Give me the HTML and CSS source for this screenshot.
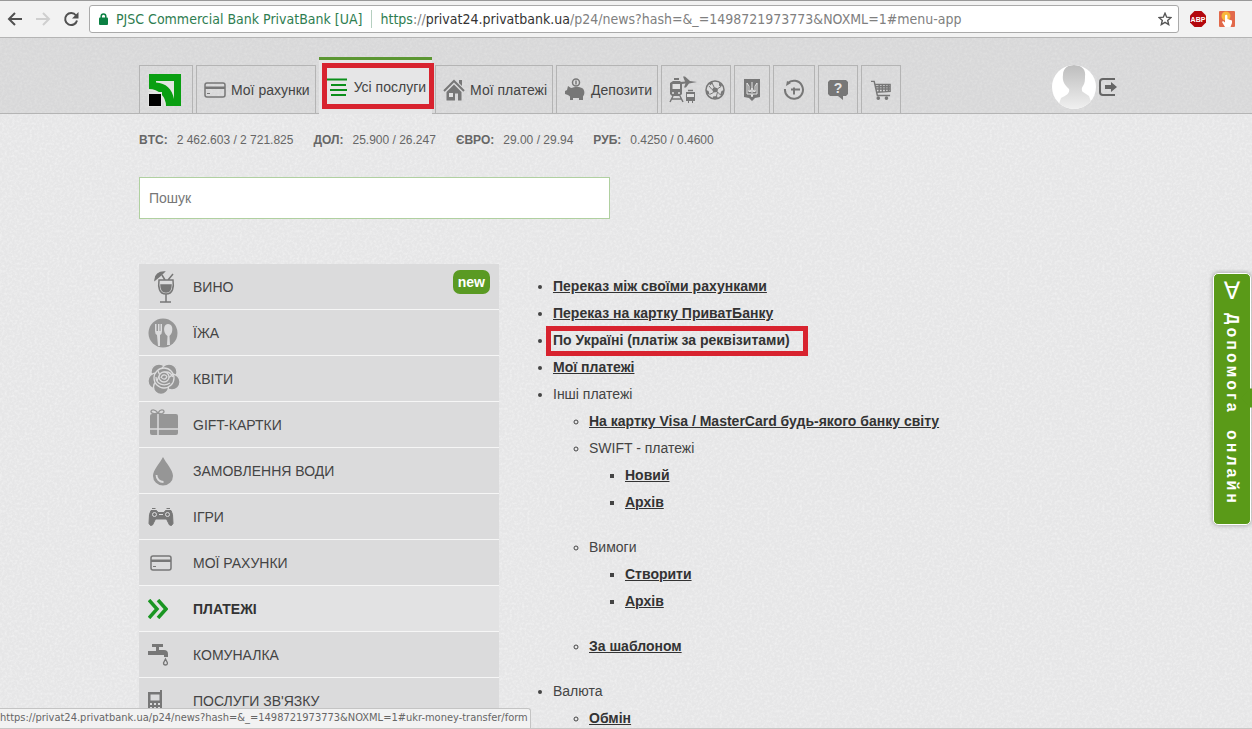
FILE: index.html
```html
<!DOCTYPE html>
<html lang="uk">
<head>
<meta charset="utf-8">
<title>Приват24</title>
<link rel="stylesheet" href="styles.css">
</head>
<body>
<div class="browser">
  <div class="toolbar">
    <button class="tool" aria-label="Назад"><svg width="16" height="16" viewBox="0 0 16 16" fill="none" stroke="#505050" stroke-width="2"><path d="M15 8H2M8 2L2 8l6 6"/></svg></button>
    <button class="tool" aria-label="Вперед"><svg width="16" height="16" viewBox="0 0 16 16" fill="none" stroke="#cfcfcf" stroke-width="2"><path d="M1 8h13M8 2l6 6-6 6"/></svg></button>
    <button class="tool" aria-label="Оновити"><svg width="16" height="16" viewBox="0 0 16 16"><path d="M13 4.500A6 6 0 1 0 14 9.500" fill="none" stroke="#505050" stroke-width="2"/><path d="M15.500 1v6.500H9z" fill="#505050"/></svg></button>
    <div class="address">
      <svg width="9" height="12" viewBox="0 0 9 12"><path d="M2.200 5V3.200a2.300 2.300 0 0 1 4.600 0V5" fill="none" stroke="#0b8043" stroke-width="1.500"/><rect y="4.500" width="9" height="7.500" rx="1" fill="#0b8043"/></svg>
      <span class="owner">PJSC Commercial Bank PrivatBank [UA]</span>
      <span class="url"><span class="secure">https</span>://<span class="host">privat24.privatbank.ua</span>/p24/news?hash=&amp;_=1498721973773&amp;NOXML=1#menu-app</span>
      <button class="tool star" aria-label="Закладка"><svg width="14" height="14" viewBox="0 0 14 14"><path d="M7 1.300l1.700 3.900 4.200.400-3.200 2.800 1 4.200L7 10.400l-3.700 2.200 1-4.200L1.100 5.600l4.200-.400z" fill="none" stroke="#555" stroke-width="1.400"/></svg></button>
    </div>
    <button class="tool" aria-label="Adblock Plus"><svg width="18" height="18" viewBox="0 0 18 18"><path d="M5.500 1h7L17 5.500v7L12.500 17h-7L1 12.500v-7z" fill="#b3070d"/><text x="9" y="12" text-anchor="middle" class="abp">ABP</text></svg></button>
    <button class="tool" aria-label="Розширення"><svg width="16" height="16" viewBox="0 0 16 16"><rect width="16" height="16" rx="1" fill="#e2694a"/><circle cx="7" cy="5" r="4.500" fill="#f8b83c"/><path d="M6 5a1.200 1.200 0 0 1 2.400 0v3l4.600 1.500V12l-1.500 4H6l-3-5 1-1 2 1.500z" fill="#fff"/></svg></button>
  </div>

  <main class="page">
    <header class="header">
      <nav class="tabs">
        <a href="#home" class="tab tab-logo" aria-label="Приват24"><svg width="34" height="34" viewBox="0 0 34 34"><path d="M1 1h32v32H17C17 24 10 17 1 17z" fill="#0a9f12"/><path d="M8 8h18v18C24 16 18 10 8 9.500z" fill="#e4e6e2"/><path d="M8 11c9 0 15 7 17 17h-8C16 22 14 18 8 17z" fill="#0a9f12"/><path d="M1 17c9 0 16 7 16 16" fill="none" stroke="#e4e6e2" stroke-width="2"/><path d="M0 19h14v15H0z" fill="#e4e4e4"/><path d="M1 21h12v12H1z" fill="#000"/></svg></a>
        <a href="#accounts" class="tab"><svg width="22" height="16" viewBox="0 0 22 16"><rect x="1" y="1" width="20" height="14" rx="2" fill="none" stroke="#777" stroke-width="1.500"/><path d="M1 4.500h20v2.500H1z" fill="#777"/><path d="M3 11.500h3" stroke="#777"/></svg>Мої рахунки</a>
        <a href="#menu-app" class="tab tab-active"><svg width="20" height="20" viewBox="0 0 20 20"><path d="M0 2.500h20M4 8h15M3 13h17M4 18h15" stroke="#0b8f1b" stroke-width="2"/></svg>Усі послуги</a>
        <a href="#payments" class="tab"><svg width="22" height="22" viewBox="0 0 22 22" fill="#777"><path d="M16 1h3v6l-3-3z"/><path d="M1 12L11 2l10 10" fill="none" stroke="#777" stroke-width="2"/><path d="M3.500 13L11 5.500l7.500 7.500v8.500H15v-7h-3v7H3.500z"/><path d="M6 14h4v4H6z" fill="#e0e0e0"/></svg>Мої платежі</a>
        <a href="#deposits" class="tab"><svg width="22" height="24" viewBox="0 0 22 24" fill="#777"><circle cx="12" cy="4.500" r="3.500" fill="none" stroke="#777" stroke-width="1.500"/><path d="M12 2.500v4" stroke="#777" stroke-width="1.500"/><path d="M4 8l3 2c3-1.500 9-1.500 11 0 3 2 3 6 1 8.500V22h-4v-2H9v2H6v-3.500L4 17l-3-1v-3l2-1z"/></svg>Депозити</a>
        <a href="#travel" class="tab tab-icon tab-travel" aria-label="Квитки та розваги"><svg width="28" height="28" viewBox="0 0 28 28" fill="#777"><path d="M4 5h7l2 2v11l-2 2H3l-2-2V7zM5 2h5v2H5z"/><path d="M3.500 8h7.500v5H3.500z" fill="#e0e0e0"/><path d="M4 20l-3 6M11 20l3 6M3 23h9" stroke="#777" stroke-width="1.500"/><circle cx="4" cy="17" r="1" fill="#e0e0e0"/><circle cx="10" cy="17" r="1" fill="#e0e0e0"/><path d="M28 6l-8 1.500-3 4h-2l1.500-4-3.500.500-2-2 5-.500-2-5h2l5 4.500z"/><path d="M17 16h9v9h-2v2h-1v-2h-3v2h-1v-2h-2z"/><path d="M18 18h7v3h-7z" fill="#e0e0e0"/><path d="M19 14.500h5" stroke="#777" stroke-width="1.500"/></svg><svg width="20" height="20" viewBox="0 0 20 20"><circle cx="10" cy="10" r="9" fill="none" stroke="#777" stroke-width="1.500"/><path d="M9 7l4 1.500-.500 3.500-4 .500-1.500-3zM4 3l3-1.500 1 1.500-3 2.500zM14 2.500l3 2.500-1 2-2-1.500zM1 10l2.500 1 1 3-2 .500zM8 16.500l4-.500 1 2.500H8zM16.500 11l2.500-1-2 5-2 .500z" fill="#777"/><path d="M9 7L7 3M13 8.500l3-2M12.500 12l3 3M8.500 12.500l-4 2M7 9.500L4 6M12.500 12l-1 4" stroke="#777" fill="none"/></svg></a>
        <a href="#state" class="tab tab-icon" aria-label="Державні послуги"><svg width="16" height="22" viewBox="0 0 16 22"><path d="M0 0h16v18l-5 1-3 3-3-3-5-1z" fill="#777"/><path d="M3 4v11h4l1 3 1-3h4V4L11 7v5l-1 1-2-4-2 4-1-1V7zM8 3v13M4 12h8" fill="none" stroke="#e4e4e4"/></svg></a>
        <a href="#history" class="tab tab-icon" aria-label="Історія"><svg width="22" height="22" viewBox="0 0 22 22" fill="none" stroke="#777" stroke-width="2"><path d="M4.500 4.500A9 9 0 1 1 2 10M8 10.500h9M11 8.500v7"/><path d="M3 7l5-3-4-2z" fill="#777" stroke="none"/></svg></a>
        <a href="#help" class="tab tab-icon" aria-label="Допомога"><svg width="20" height="20" viewBox="0 0 20 20"><path d="M2 0h16l2 2v12l-2 2h-3v4l-5-4H2l-2-2V2z" fill="#777"/><text x="10" y="13" text-anchor="middle" class="question">?</text></svg></a>
        <a href="#cart" class="tab tab-icon" aria-label="Кошик"><svg width="20" height="22" viewBox="0 0 22 22" fill="none" stroke="#777" stroke-width="1.600"><path d="M0 1.500h3.500L7 17h14M4.500 5H21v7.500L6 13.500M5 7.500h16M6 10h15M9 5v8M12.500 5v8M16 5v8M19 5v8"/><circle cx="8" cy="20" r="1.200" fill="#777"/><circle cx="17" cy="20" r="1.200" fill="#777"/></svg></a>
      </nav>
      <div class="user">
        <a href="#profile" aria-label="Профіль"><svg width="46" height="46" viewBox="0 0 46 46"><defs><linearGradient id="shade" x2="0" y2="1"><stop stop-color="#bdbdbd"/><stop offset="1" stop-color="#f1f1f1"/></linearGradient><clipPath id="round"><circle cx="23" cy="23" r="22"/></clipPath></defs><circle cx="23" cy="23" r="22" fill="#fff"/><path clip-path="url(#round)" d="M23 1c8 0 12 5 11 11 0 4 0 7-2 10-2 2-1 6 0 6l6 4 5 14H6L10 34c6-3 9-5 8-9-4-4-7-7-6-14C12 5 16 1 23 1z" fill="url(#shade)"/></svg></a>
        <a href="#logout" aria-label="Вийти"><svg width="20" height="20" viewBox="0 0 20 20"><path d="M17 2H5Q2 2 2 5v10q0 3 3 3h12" fill="none" stroke="#666" stroke-width="2"/><path d="M7 8h6V5l6 5-6 5v-3H7z" fill="#666"/></svg></a>
      </div>
    </header>

    <div class="content">
      <dl class="rates">
        <div class="rate"><dt>BTC:</dt><dd>2 462.603 / 2 721.825</dd></div>
        <div class="rate"><dt>ДОЛ:</dt><dd>25.900 / 26.247</dd></div>
        <div class="rate"><dt>ЄВРО:</dt><dd>29.00 / 29.94</dd></div>
        <div class="rate"><dt>РУБ:</dt><dd>0.4250 / 0.4600</dd></div>
      </dl>
      <input class="search" type="search" placeholder="Пошук" aria-label="Пошук">

      <div class="columns">
        <nav class="services">
          <a href="#wine" class="service"><span class="pic"><svg width="22" height="34" viewBox="0 0 22 34" fill="none" stroke="#777" stroke-width="1.500"><path d="M1 10c0-5 4-8 9-8L7 5z" fill="#777"/><path d="M8 5l3 5M14 10l5-6M5 10h14c1 7 0 14-7 14S4 17 5 10zM12 24v8M6 32h11"/><path d="M7 15h10c0 5-2 7-5 7s-5-2-5-7z" fill="#777"/></svg></span>ВИНО<span class="badge">new</span></a>
          <a href="#food" class="service"><span class="pic"><svg width="30" height="30" viewBox="0 0 30 30"><circle cx="15" cy="15" r="14.500" fill="#969696"/><path d="M7 6v7q0 3 2 4l1 11h2V17q2-1 2-4V6l-1.500 0v7h-1V6h-1.500v7H8.500V6z" fill="#dcdcdd"/><path d="M20 6c4 0 5 4 4 8-.500 2-2 3-2.500 4L22 27h-3l.500-9c-1-1-2.500-2-3-4-1-4 0-8 3.500-8z" fill="#dcdcdd"/></svg></span>ЇЖА</a>
          <a href="#flowers" class="service"><span class="pic"><svg width="32" height="32" viewBox="0 0 32 32"><g fill="#969696" stroke="#dcdcdd" stroke-width="1.300"><circle cx="11" cy="9" r="8"/><circle cx="21" cy="9" r="8"/><circle cx="8" cy="18" r="8"/><circle cx="24" cy="19" r="8"/><circle cx="13" cy="24" r="7.500"/><circle cx="16" cy="15" r="10"/><path d="M8 14c0 7 8 10 14 6M10 8c3 9 11 8 15 3M9 18c3-10 12-12 16-4" fill="none"/><circle cx="16" cy="14" r="5"/><path d="M13 15c1-4 5-4 6-1M13 14c2 3 5 3 6-1" fill="none"/></g></svg></span>КВІТИ</a>
          <a href="#gift" class="service"><span class="pic pic-inset"><svg width="28" height="32" viewBox="0 0 28 32"><path d="M0 7q0-2 2-2h24q2 0 2 2v17q0 2-2 2H2q-2 0-2-2z" fill="#969696"/><path d="M8 5v21M0 20h28" stroke="#dcdcdd" stroke-width="1.500"/><path d="M8 4C5 0 1 0 1 3c1 2 5 2 7 1 2-4 6-4 6-1-1 2-4 2-6 1z" fill="none" stroke="#969696" stroke-width="1.400"/></svg></span>GIFT-КАРТКИ</a>
          <a href="#water" class="service"><span class="pic"><svg width="30" height="30" viewBox="0 0 30 30"><path d="M15 1c3 6 10 13 10 19a10 9.500 0 0 1-20 0C5 14 12 7 15 1z" fill="#969696"/><path d="M8.500 19c0 4 3 7 7 7" fill="none" stroke="#dcdcdd" stroke-width="1.800"/></svg></span>ЗАМОВЛЕННЯ ВОДИ</a>
          <a href="#games" class="service"><span class="pic"><svg width="26" height="20" viewBox="0 0 26 20"><path d="M3 3.500h5.500l1.500 2h6l1.500-2H23l1.500 4 .500 9-1.500 2-2-.500-3-6h-11l-3 6-2 .500L1 16.500l.500-9zM4 1.500h3.500M18.500 1.500H22" fill="#777" stroke="#777"/><circle cx="6.500" cy="7.500" r="2" fill="#777" stroke="#dcdcdd"/><circle cx="19.500" cy="7.500" r="2" fill="#777" stroke="#dcdcdd"/><path d="M11 7.500h4" stroke="#dcdcdd"/></svg></span>ІГРИ</a>
          <a href="#accounts" class="service"><span class="pic pic-inset"><svg width="22" height="16" viewBox="0 0 22 16"><rect x="1" y="1" width="20" height="14" rx="2" fill="none" stroke="#777" stroke-width="1.500"/><path d="M1 4.500h20v2.500H1z" fill="#777"/><path d="M3 11.500h3" stroke="#777"/></svg></span>МОЇ РАХУНКИ</a>
          <a href="#payments" class="service service-active"><span class="pic"><svg width="20" height="20" viewBox="0 0 20 20" fill="none" stroke="#1a9622" stroke-width="3.500"><path d="M1 1l8 9-8 9M10 1l8 9-8 9"/></svg></span>ПЛАТЕЖІ</a>
          <a href="#utilities" class="service"><span class="pic"><svg width="20" height="22" viewBox="0 0 20 22" fill="#777"><path d="M4 0h11v3H4zM8 3h3v3h5q4 0 4 4v3h-4v-2H0V7h8z"/><path d="M17.500 15l2 4a2 2 0 0 1-4 0z" fill="none" stroke="#777" stroke-width="1.300"/></svg></span>КОМУНАЛКА</a>
          <a href="#telecom" class="service"><span class="pic"><svg width="16" height="22" viewBox="0 0 16 22"><path d="M0 2h12V0h2v22H0z" fill="#777"/><path d="M2.500 4.500h9v6h-9zM2 13h2v2H2zM6 13h2v2H6zM10 13h2v2h-2zM2 17h2v2H2zM6 17h2v2H6zM10 17h2v2h-2z" fill="#dcdcdd"/></svg></span>ПОСЛУГИ ЗВ'ЯЗКУ</a>
        </nav>

        <ul class="links">
          <li><a href="#own">Переказ між своїми рахунками</a></li>
          <li><a href="#card">Переказ на картку ПриватБанку</a></li>
          <li><a href="#ukr-money-transfer/form" class="marked">По Україні (платіж за реквізитами)</a></li>
          <li><a href="#my-payments">Мої платежі</a></li>
          <li>Інші платежі
            <ul>
              <li><a href="#visa">На картку Visa / MasterCard будь-якого банку світу</a></li>
              <li>SWIFT - платежі
                <ul>
                  <li><a href="#swift-new">Новий</a></li>
                  <li><a href="#swift-archive">Архів</a></li>
                </ul>
              </li>
              <li>Вимоги
                <ul>
                  <li><a href="#claim-new">Створити</a></li>
                  <li><a href="#claim-archive">Архів</a></li>
                </ul>
              </li>
              <li><a href="#template">За шаблоном</a></li>
            </ul>
          </li>
          <li>Валюта
            <ul>
              <li><a href="#exchange">Обмін</a></li>
            </ul>
          </li>
        </ul>
      </div>
    </div>

    <button class="assist"><span class="assist-mark">∀</span><span class="assist-text">Допомога онлайн</span></button>
    <div class="status">https://privat24.privatbank.ua/p24/news?hash=&amp;_=1498721973773&amp;NOXML=1#ukr-money-transfer/form</div>
  </main>
</div>
</body>
</html>
```
FILE: styles.css
```css
* { box-sizing: border-box; }
body { margin: 0; font: 14px/18px "Liberation Sans", Arial, sans-serif; color: #444; }
a { color: inherit; text-decoration: none; }
button { font: inherit; border: 0; padding: 0; background: none; cursor: pointer; }
svg { display: block; flex: none; }

.browser { display: flex; flex-direction: column; height: 100vh; overflow: hidden; border-top: 1px solid #999; border-bottom: 1px solid #c8c6c5; }

.toolbar { display: flex; align-items: center; gap: 12px; padding: 4px 17px 4px 7px; border-bottom: 1px solid #b4b4b4; background: #f2f2f2; }
.tool { display: flex; }
.address { flex: 1; display: flex; align-items: center; min-width: 0; height: 28px; margin: 0 -2px; padding: 0 6px 0 9px; border: 1px solid #aaa; border-radius: 3px; background: #fff; font: 14px/18px "DejaVu Sans Condensed", "Noto Sans", sans-serif; color: #808080; white-space: nowrap; }
.owner { margin-left: 8px; padding-right: 9px; border-right: 1px solid #b5cfc0; color: #2e7d50; }
.url { margin-left: 8px; }
.secure { color: #2e7d50; }
.host { color: #333; }
.star { margin-left: auto; }
.abp { font: bold 7px "Liberation Sans", sans-serif; fill: #fff; }
.question { font: bold 14px "Liberation Sans", sans-serif; fill: #e6e6e6; }

.page {
  position: relative; flex: 1; min-height: 0; overflow: hidden;
  background: #e6e6e7 url("data:image/svg+xml,%3Csvg xmlns='http://www.w3.org/2000/svg' width='240' height='240'%3E%3Cfilter id='n' x='0' y='0' width='1' height='1'%3E%3CfeTurbulence type='fractalNoise' baseFrequency='.4' numOctaves='3' stitchTiles='stitch'/%3E%3CfeColorMatrix values='0 0 0 0 1 0 0 0 0 1 0 0 0 0 1 2 0 0 0 -.8'/%3E%3C/filter%3E%3Crect width='240' height='240' filter='url(%23n)' opacity='.4'/%3E%3C/svg%3E");
}

.header { display: flex; align-items: flex-end; justify-content: space-between; height: 76px; padding: 0 134px 0 139px; border-bottom: 1px solid #b4b4b4; background: rgba(170, 170, 170, .22); }
.tabs { display: flex; align-items: flex-end; gap: 3px; }
.tab { display: flex; align-items: center; gap: 5px; height: 48px; padding: 1px 5px 0 7px; border: 1px solid #b4b4b4; border-bottom: 0; white-space: nowrap; }
.tab-logo { padding: 1px 10px 0 8px; }
.tab-icon { padding: 1px 9px 0; gap: 8px; }
.tab-travel { padding: 1px 5px 0 7px; }
.tab-active { position: relative; gap: 7px; height: 57px; margin-bottom: -1px; padding: 0 6px 0 8px; border: 0; border-top: 3px solid #5b9632; background: #e6e6e7; }
.tab-active::after { content: ""; position: absolute; inset: 3px -2px 5px 3px; border: 5px solid #d8232f; }
.user { display: flex; align-items: center; gap: 1px; padding-bottom: 3px; }

.content { padding: 17px 139px 0; }
.rates { display: flex; gap: 20px; margin: 0 0 28px; font-size: 12px; color: #666; }
.rate { display: flex; gap: 9px; }
.rate dt { font-weight: bold; }
.rate dd { margin: 0; }
.search { display: block; width: 50%; max-width: 471px; height: 42px; margin: 0; padding: 0 9px; border: 1px solid #b0d0a0; border-radius: 0; background: #fff; font: inherit; color: #444; appearance: none; }
.search::placeholder { color: #777; opacity: 1; }

.columns { display: grid; grid-template-columns: 360px 1fr; gap: 18px; margin-top: 45px; align-items: start; }
.services { display: flex; flex-direction: column; background: #dbdbdc; }
.service { display: flex; align-items: center; height: 46px; padding: 0 9px; border-bottom: 1px solid #f6f6f6; }
.service-active { background: #e2e2e3; color: #333; font-weight: bold; }
.pic { display: flex; width: 45px; }
.pic-inset { padding-left: 2px; }
.service:first-child .pic { padding-left: 6px; }
.badge { align-self: flex-start; margin: 6px 0 0 auto; padding: 3px 5px; border-radius: 7px; background: #5a9a23; color: #fff; font-weight: bold; }

.links, .links ul { margin: 0; padding-left: 36px; line-height: 27px; }
.links { padding-top: 9px; }
.links ul { margin-bottom: 18px; }
.links a { font-weight: bold; color: #333; text-decoration: underline; }
.links .marked { position: relative; text-decoration: none; }
.marked::after { content: ""; position: absolute; inset: -6px -18px -8px -7px; border: 5px solid #d8232f; }

.assist { position: absolute; top: 235px; right: 1px; display: flex; flex-direction: column; align-items: center; width: 38px; height: 252px; padding-top: 3px; gap: 8px; border: 1px solid #fff; border-radius: 5px; background: #5a9a18; box-shadow: 0 0 5px #999; color: #fff; font-weight: bold; }
.assist::after { content: ""; position: absolute; right: -8px; top: 117px; width: 14px; height: 14px; background: #5a9a18; transform: rotate(45deg); }
.assist-mark { font: 24px/28px "DejaVu Sans", sans-serif; }
.assist-text { writing-mode: vertical-rl; font-size: 16px; line-height: 20px; letter-spacing: 3px; word-spacing: 8px; }

.status { position: absolute; left: 0; bottom: 0; padding: 0 2px 1px 0; border: 1px solid #c4c4c4; border-left: 0; border-bottom: 0; border-radius: 0 3px 0 0; background: #f2f2f2; font: 11px/18px "DejaVu Sans Condensed", "Noto Sans", sans-serif; color: #666; white-space: nowrap; }
```
